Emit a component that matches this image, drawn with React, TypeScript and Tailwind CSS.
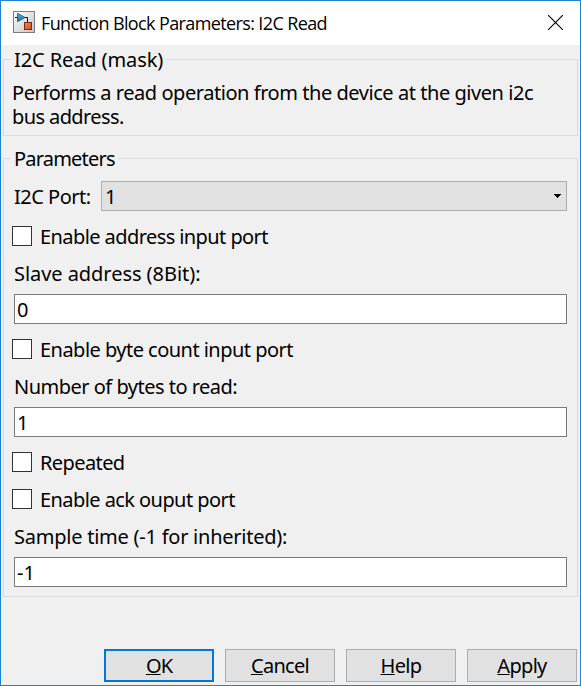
import type { ReactNode } from "react";

function BlockIcon() {
  return (
    <svg width="22" height="22" viewBox="0 0 22 22" className="mb-[2px] shrink-0">
      <defs>
        <linearGradient id="panel" x1="0" y1="0" x2="1" y2="1">
          <stop offset="0" stopColor="#ffffff" />
          <stop offset="1" stopColor="#c4c4c4" />
        </linearGradient>
        <linearGradient id="gain" x1="0" y1="0" x2="0" y2="1">
          <stop offset="0" stopColor="#5cb4e4" />
          <stop offset="1" stopColor="#1a6aa8" />
        </linearGradient>
        <linearGradient id="block" x1="0" y1="0" x2="1" y2="1">
          <stop offset="0" stopColor="#f08a58" />
          <stop offset="1" stopColor="#d44a18" />
        </linearGradient>
      </defs>
      <rect x="0.5" y="0.5" width="21" height="21" fill="url(#panel)" stroke="#7c7c7c" />
      <path d="M2 6.5H5M11 6.5H14.5V11" fill="none" stroke="#111" />
      <path d="M4.5 2.3L12 6.5L4.5 10.7Z" fill="url(#gain)" stroke="#1c5f94" strokeWidth="0.9" />
      <rect x="11.5" y="11.5" width="7" height="7" fill="url(#block)" stroke="#7e2a0c" />
    </svg>
  );
}

function Group({ title, titleClass, className, children }: { title: string; titleClass: string; className: string; children: ReactNode }) {
  return (
    <section className={`w-[575px] border border-[#dcdcdc] ${className}`}>
      <h2 className="-mt-[12px] ml-[7px] w-fit bg-[#f0f0f0] pr-[3px] pl-[3px] leading-6">
        <span className={titleClass}>{title}</span>
      </h2>
      {children}
    </section>
  );
}

function Check({ label, className }: { label: string; className: string }) {
  return (
    <label className="ml-2 flex h-[37px] items-start">
      <span className="mt-[7px] size-5 shrink-0 border border-[#333] bg-white" />
      <span className={`mt-[6px] ml-2 leading-6 ${className}`}>{label}</span>
    </label>
  );
}

function Field({ label, value, labelClass }: { label: string; value: string; labelClass: string }) {
  return (
    <div className="ml-[10px] w-[553px]">
      <div className={`h-[38px] pt-[6px] leading-6 ${labelClass}`}>{label}</div>
      <div className="h-[30px] border border-[#7a7a7a] bg-white pt-[3px] pl-[2px] leading-6">{value}</div>
    </div>
  );
}

function Button({ hot, rest, primary, className }: { hot: string; rest: string; primary?: boolean; className: string }) {
  return (
    <button
      className={`flex h-[33px] w-[110px] items-center justify-center bg-[#e1e1e1] leading-[25px] ${
        primary ? "border-2 border-[#0078d7]" : "border border-[#adadad]"
      }`}
    >
      <span className={className}>
        <span className="underline decoration-1 underline-offset-[1px] [text-decoration-skip-ink:none]">{hot}</span>
        {rest}
      </span>
    </button>
  );
}

export default function App() {
  return (
    <main className="flex h-[686px] w-[581px] flex-col overflow-hidden border border-[#1883d7] bg-[#f0f0f0] font-['Noto_Sans',sans-serif] text-[20px] whitespace-nowrap text-black">
      <header className="flex h-[44px] shrink-0 items-center bg-white pr-[17px] pl-[12px]">
        <BlockIcon />
        <h1 className="ml-[6px] flex-1 font-['Open_Sans',sans-serif] text-[18px] leading-6 tracking-[-0.62px]">
          Function Block Parameters: I2C Read
        </h1>
        <svg width="15" height="15" viewBox="0 0 15 15" className="mb-px shrink-0">
          <path d="M0 0L15 15M15 0L0 15" stroke="#000" strokeWidth="1.1" />
        </svg>
      </header>

      <div className="flex flex-1 flex-col pt-[14px] pl-[2px]">
        <Group title="I2C Read (mask)" titleClass="tracking-[-0.1px]" className="h-[77px]">
          <div className="mt-[9px] ml-2 leading-6">
            <p className="tracking-[-0.45px]">Performs a read operation from the device at the given i2c</p>
            <p className="tracking-[-0.6px]">bus address.</p>
          </div>
        </Group>

        <Group title="Parameters" titleClass="tracking-[-0.8px]" className="mt-[22px] h-[439px]">
          <div className="mt-[10px] ml-[10px] flex h-[30px]">
            <span className="w-[87px] pt-[4px] leading-6 tracking-[-0.5px]">I2C Port:</span>
            <div className="flex w-[466px] justify-between border border-[#adadad] bg-[#e1e1e1] pl-[3px]">
              <span className="pt-[3px] leading-6">1</span>
              <svg width="7" height="4" viewBox="0 0 7 4" className="mt-[12px] mr-[5px]" shapeRendering="crispEdges">
                <path d="M0 0H7V1H6V2H5V3H4V4H3V3H2V2H1V1H0Z" />
              </svg>
            </div>
          </div>
          <div className="mt-2">
            <Check label="Enable address input port" className="tracking-[-0.58px]" />
            <Field label="Slave address (8Bit):" value="0" labelClass="tracking-[-0.05px]" />
            <div className="mt-[8px]">
              <Check label="Enable byte count input port" className="tracking-[-0.53px]" />
            </div>
            <Field label="Number of bytes to read:" value="1" labelClass="tracking-[-0.51px]" />
            <div className="mt-[8px]">
              <Check label="Repeated" className="tracking-[-0.6px]" />
              <Check label="Enable ack ouput port" className="tracking-[-0.57px]" />
            </div>
            <Field label="Sample time (-1 for inherited):" value="-1" labelClass="tracking-[-0.24px]" />
          </div>
        </Group>

        <footer className="mt-[52px] flex justify-end gap-[11px] pr-[3px]">
          <Button hot="O" rest="K" primary className="tracking-[-0.9px]" />
          <Button hot="C" rest="ancel" className="tracking-[-0.7px]" />
          <Button hot="H" rest="elp" className="tracking-[-0.7px]" />
          <Button hot="A" rest="pply" className="tracking-[-0.7px]" />
        </footer>
      </div>
    </main>
  );
}
